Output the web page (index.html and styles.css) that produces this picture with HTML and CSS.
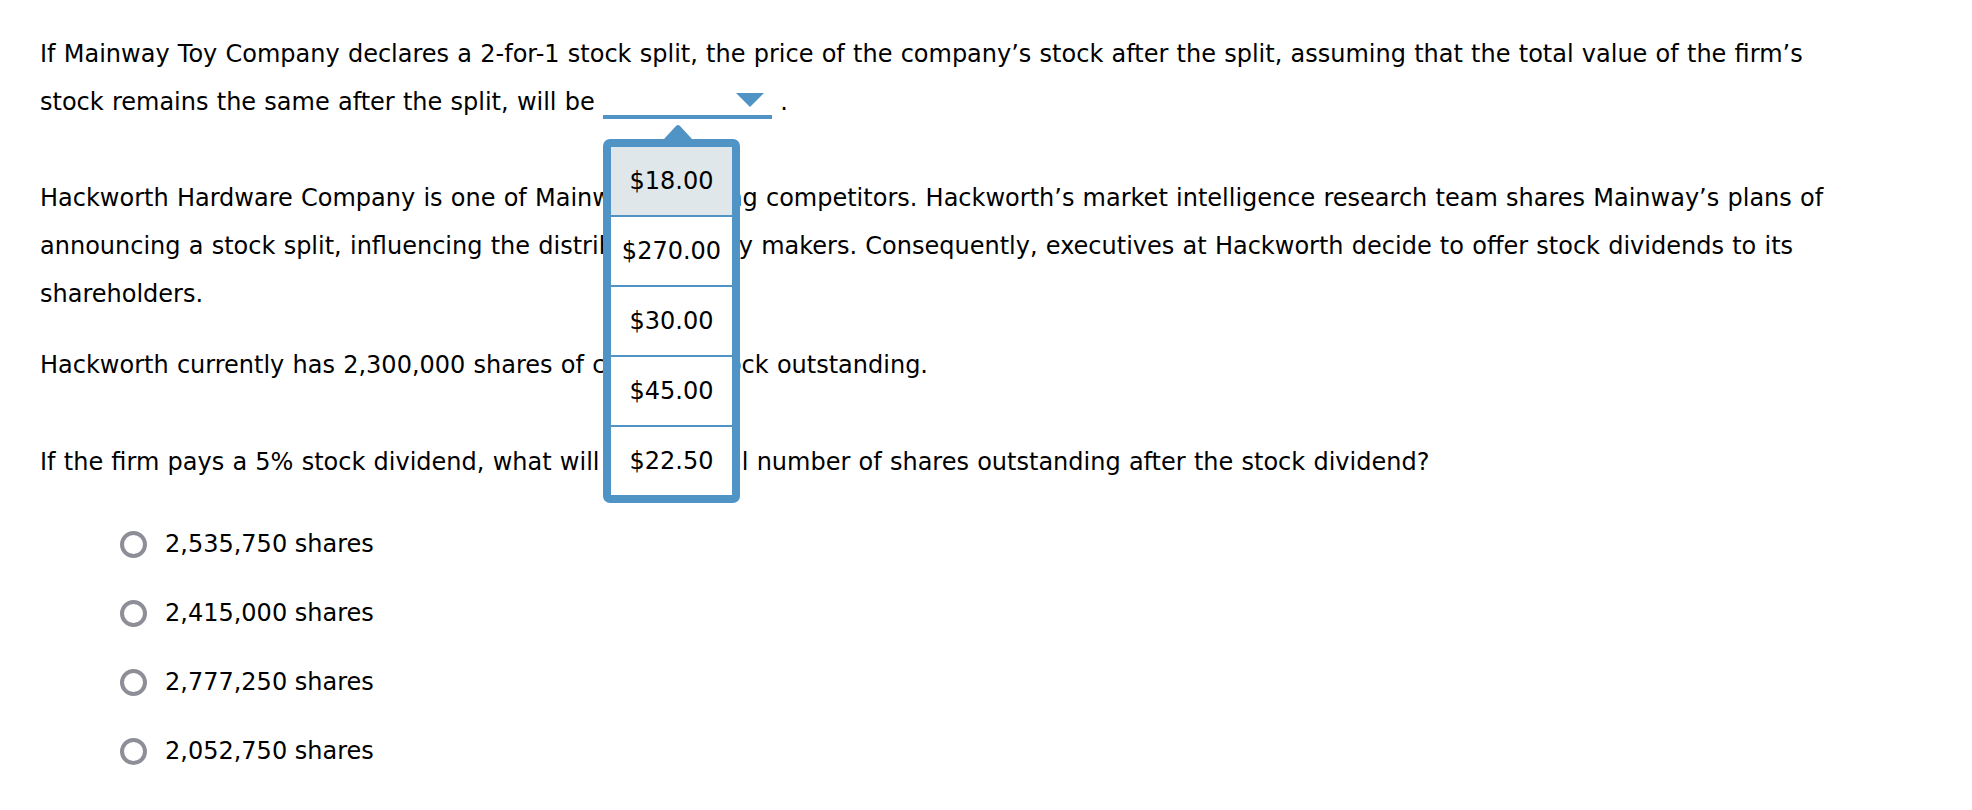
FILE: index.html
```html
<!DOCTYPE html>
<html>
<head>
<meta charset="utf-8">
<link rel="stylesheet" href="styles.css">
</head>
<body>
<div class="page">
  <p class="para p1">If Mainway Toy Company declares a 2-for-1 stock split, the price of the company’s stock after the split, assuming that the total value of the firm’s stock remains the same after the split, will be <span class="dropdown"><svg class="caret" width="28" height="14" viewBox="0 0 28 14"><polygon points="0,0 28,0 14,14" fill="#4f94c4"/></svg><span class="menu"><svg class="menu-arrow" width="28" height="15" viewBox="0 0 28 15"><path d="M0,15 L12,2 Q14,0 16,2 L28,15 Z" fill="#4f94c4"/></svg><span class="menu-item active">$18.00</span><span class="menu-item">$270.00</span><span class="menu-item">$30.00</span><span class="menu-item">$45.00</span><span class="menu-item">$22.50</span></span></span> .</p>
  <p class="para p2">Hackworth Hardware Company is one of Mainway’s leading competitors. Hackworth’s market intelligence research team shares Mainway’s plans of announcing a stock split, influencing the distribution of toy makers. Consequently, executives at Hackworth decide to offer stock dividends to its shareholders.</p>
  <p class="para p3">Hackworth currently has 2,300,000 shares of common stock outstanding.</p>
  <p class="para p4">If the firm pays a 5% stock dividend, what will be the total number of shares outstanding after the stock dividend?</p>
  <div class="options">
    <label class="option"><span class="radio"></span><span>2,535,750 shares</span></label>
    <label class="option"><span class="radio"></span><span>2,415,000 shares</span></label>
    <label class="option"><span class="radio"></span><span>2,777,250 shares</span></label>
    <label class="option"><span class="radio"></span><span>2,052,750 shares</span></label>
  </div>
</div>
</body>
</html>
```

FILE: styles.css
```css
html, body {
  margin: 0;
  padding: 0;
  background: #ffffff;
}
body {
  font-family: "DejaVu Sans", Verdana, sans-serif;
  font-size: 24px;
  color: #000000;
}
.page {
  width: 1800px;
  padding: 30px 40px 0 40px;
}
.para {
  margin: 0;
  line-height: 48px;
  word-spacing: 0.6px;
}
.p2 {
  margin-top: 48px;
}
.p3 {
  margin-top: 23px;
}
.p4 {
  margin-top: 49px;
}
.dropdown {
  position: relative;
  display: inline-block;
  width: 169px;
  height: 22px;
  border-bottom: 4px solid #4f94c4;
  vertical-align: -9px;
  line-height: 1;
  word-spacing: 0;
}
.caret {
  position: absolute;
  right: 8px;
  top: 0;
  display: block;
}
.menu {
  position: absolute;
  left: 0;
  top: calc(100% + 24px);
  width: 137px;
  box-sizing: border-box;
  border: 8px solid #4f94c4;
  border-radius: 7px;
  background: #ffffff;
  display: flex;
  flex-direction: column;
  z-index: 5;
}
.menu-arrow {
  position: absolute;
  left: 53px;
  top: -23px;
  display: block;
}
.menu-item {
  height: 68px;
  display: flex;
  align-items: center;
  justify-content: center;
  font-size: 24px;
  background: #ffffff;
}
.menu-item + .menu-item {
  border-top: 2px solid #4f94c4;
}
.menu-item.active {
  background: #dfe7ea;
}
.options {
  margin-top: 34px;
  display: flex;
  flex-direction: column;
  gap: 21px;
  padding-left: 80px;
}
.option {
  display: flex;
  align-items: center;
  gap: 18px;
  line-height: 48px;
}
.radio {
  width: 27px;
  height: 27px;
  box-sizing: border-box;
  border: 4px solid #8e8e98;
  border-radius: 50%;
  flex: none;
}
```
